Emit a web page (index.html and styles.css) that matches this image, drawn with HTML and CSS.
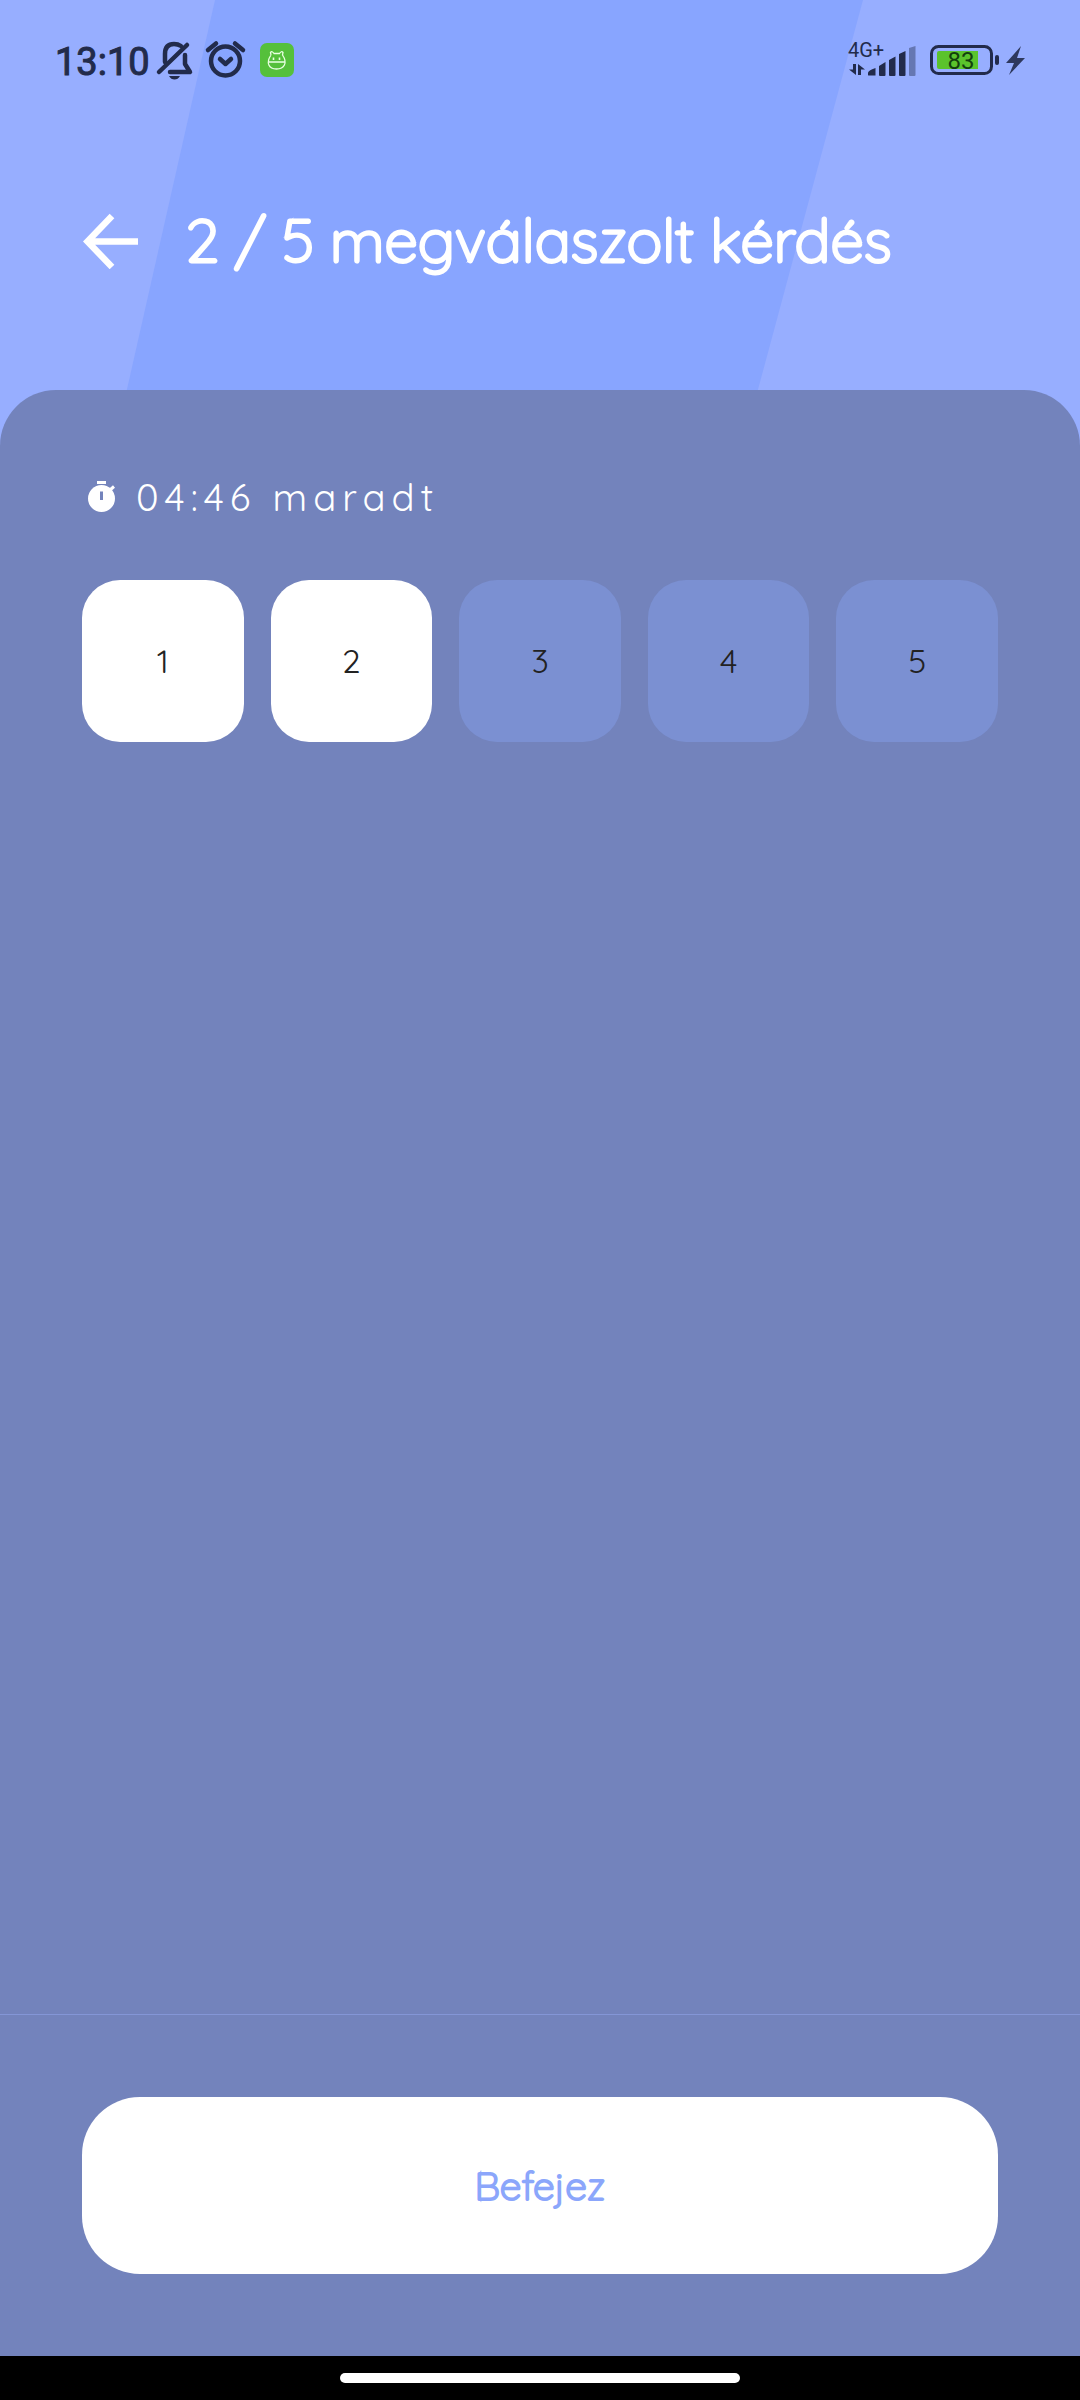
FILE: index.html
```html
<!DOCTYPE html>
<html lang="hu">
<head>
<meta charset="utf-8">
<meta name="viewport" content="width=device-width, initial-scale=1">
<title>2 / 5 megválaszolt kérdés</title>
<link rel="stylesheet" href="styles.css">
</head>
<body>
<header class="header">
  <svg class="header-art" viewBox="0 0 1080 460" preserveAspectRatio="none" aria-hidden="true">
    <path d="M215 0H863L739 460H111Z" fill="#88a5ff"/>
  </svg>
  <div class="status">
    <div class="status-side">
      <span class="clock">13:10</span>
      <svg class="status-icons" width="144" height="44" viewBox="154 38 144 44" aria-hidden="true">
        <g fill="none" stroke="#222b4b" stroke-width="4.500" stroke-linecap="round" stroke-linejoin="round">
          <path d="M159 72L187 45"/>
          <path d="M165 62V54Q165 44 174 44Q178 44 181 46"/>
          <path d="M185 55V64L190 72H170"/>
          <circle cx="225.500" cy="61" r="14.500"/>
          <path d="M220 59L225.500 64L231 59"/>
          <path d="M208 50L216 43.500M235 43.500L243 50"/>
        </g>
        <path d="M169 76H180Q178 79.500 174.500 79.500Q171 79.500 169 76Z" fill="#222b4b"/>
        <rect x="260" y="43" width="34" height="34" rx="7" fill="#55c03b"/>
        <g fill="none" stroke="#e9ffe2" stroke-width="1.300">
          <path d="M271 55L270.500 52.500Q272 50.500 274 53.500H279.500Q281.500 50.500 283 52.500L282.500 55C288 63 284 69 276.500 69S265.500 63 271 55M268.500 62H285"/>
          <path d="M273.500 57.500V60M279.500 57.500V60" stroke-width="1.600"/>
        </g>
      </svg>
    </div>
    <svg class="status-icons" width="182" height="44" viewBox="846 38 182 44" role="img" aria-label="4G+, 83%">
      <text class="network" x="848" y="57">4G+</text>
      <g fill="#222b4b">
        <path d="M853 64H856V75L849 69.500H853ZM858 75V64L865 69.500H861V75Z"/>
        <path d="M868 75V73Q868 70.500 875.500 68V75.500H869Q868 75.500 868 75ZM879 75V66L885.500 62V75Q885.500 76 884.500 76H880Q879 76 879 75ZM889 75V60L895.500 56.500V75Q895.500 76 894.500 76H890Q889 76 889 75ZM899 75V54L905.500 51V75Q905.500 76 904.500 76H900Q899 76 899 75Z"/>
        <path d="M909 75V48L915.500 46V75Q915.500 76 914.500 76H910Q909 76 909 75Z" opacity=".42"/>
        <rect x="995" y="55" width="4" height="10" rx="2"/>
        <path d="M1021 46L1006 63H1014L1009 75L1025 58H1017Z" opacity=".9"/>
      </g>
      <rect x="931.500" y="46.500" width="60" height="27" rx="7" fill="none" stroke="#222b4b" stroke-width="3"/>
      <path d="M939 51H978V69H939Q937 69 937 67V53Q937 51 939 51Z" fill="#5bc32c"/>
      <text class="charge" x="961" y="69" text-anchor="middle">83</text>
    </svg>
  </div>
  <div class="title-row">
    <button class="back" type="button" aria-label="Vissza">
      <svg width="56" height="58" viewBox="0 0 56 58" aria-hidden="true"><path d="M30 5L5.500 30.500L30 56M6 30.500H57" fill="none" stroke="#fff" stroke-width="6.500"/></svg>
    </button>
    <h1 class="title">2 / 5 megválaszolt kérdés</h1>
  </div>
</header>
<main class="panel">
  <div class="timer">
    <svg width="28" height="32" viewBox="0 0 28 32" aria-hidden="true">
      <path d="M9 0H18V3H9Z" fill="#fff"/>
      <circle cx="13.500" cy="17.500" r="13.500" fill="#fff"/>
      <path d="M22 9L26 5.500" stroke="#fff" stroke-width="3"/>
      <path d="M12 10.500H15V19H12Z" fill="#7383bc"/>
    </svg>
    <span>04:46 maradt</span>
  </div>
  <nav class="questions" aria-label="Kérdések">
    <button class="question answered" type="button">1</button>
    <button class="question answered" type="button">2</button>
    <button class="question" type="button">3</button>
    <button class="question" type="button">4</button>
    <button class="question" type="button">5</button>
  </nav>
</main>
<footer class="actions">
  <button class="finish" type="button">Befejez</button>
</footer>
<div class="system-bar"><div class="handle"></div></div>
</body>
</html>
```
FILE: styles.css
```css
* { box-sizing: border-box; }

body {
  margin: 0;
  min-height: 100vh;
  display: flex;
  flex-direction: column;
  background: #7383bc;
  color: #fff;
  font-family: Quicksand, Lato, sans-serif;
}

button {
  border: 0;
  padding: 0;
  font-family: inherit;
  cursor: pointer;
}

svg { display: block; flex: none; }

.header {
  position: relative;
  padding-bottom: 176px;
  background: #97aeff;
}

.header-art {
  position: absolute;
  inset: 0;
  width: 100%;
  height: 100%;
}

.status {
  position: relative;
  display: flex;
  justify-content: space-between;
  align-items: center;
  padding: 38px 52px 0 55px;
  height: 82px;
}

.status-side {
  display: flex;
  align-items: center;
  gap: 4px;
}

.clock {
  padding-top: 4px;
  color: #222b4b;
  font: 400 38px/44px Roboto, sans-serif;
  -webkit-text-stroke: 1px #222b4b;
}

.network { font: 400 20px Roboto, sans-serif; fill: #222b4b; }
.charge { font: 400 24px Roboto, sans-serif; fill: #12400d; }

.title-row {
  position: relative;
  display: flex;
  align-items: center;
  gap: 48px;
  padding: 114px 82px 0;
}

.back { background: none; }

.title {
  margin: 0;
  font-size: 60px;
  font-weight: 300;
  line-height: 88px;
  white-space: nowrap;
  -webkit-text-stroke: 3px #fff;
}

.panel {
  position: relative;
  flex: 1;
  margin-top: -70px;
  padding: 82px 82px 40px;
  border-radius: 56px 56px 0 0;
  background: #7383bc;
}

.timer {
  display: flex;
  align-items: center;
  gap: 20px;
  height: 50px;
  padding-left: 6px;
  font-size: 38px;
  font-weight: 400;
  letter-spacing: 6px;
}

.questions {
  display: grid;
  grid-template-columns: repeat(5, 1fr);
  gap: 27px;
  margin-top: 58px;
}

.question {
  aspect-ratio: 1;
  border-radius: 38px;
  background: #7b90d2;
  color: #222;
  font-size: 33px;
  font-weight: 400;
}

.answered { background: #fff; }

.actions {
  padding: 82px;
  border-top: 1px solid #8496d6;
}

.finish {
  display: block;
  width: 100%;
  height: 177px;
  border-radius: 58px;
  background: #fff;
  color: #8ba6fb;
  font-size: 39px;
  font-weight: 300;
  -webkit-text-stroke: 2px #8ba6fb;
}

.system-bar {
  display: flex;
  justify-content: center;
  align-items: center;
  height: 44px;
  background: #000;
}

.handle {
  width: 37%;
  height: 10px;
  border-radius: 5px;
  background: #fff;
}
```
